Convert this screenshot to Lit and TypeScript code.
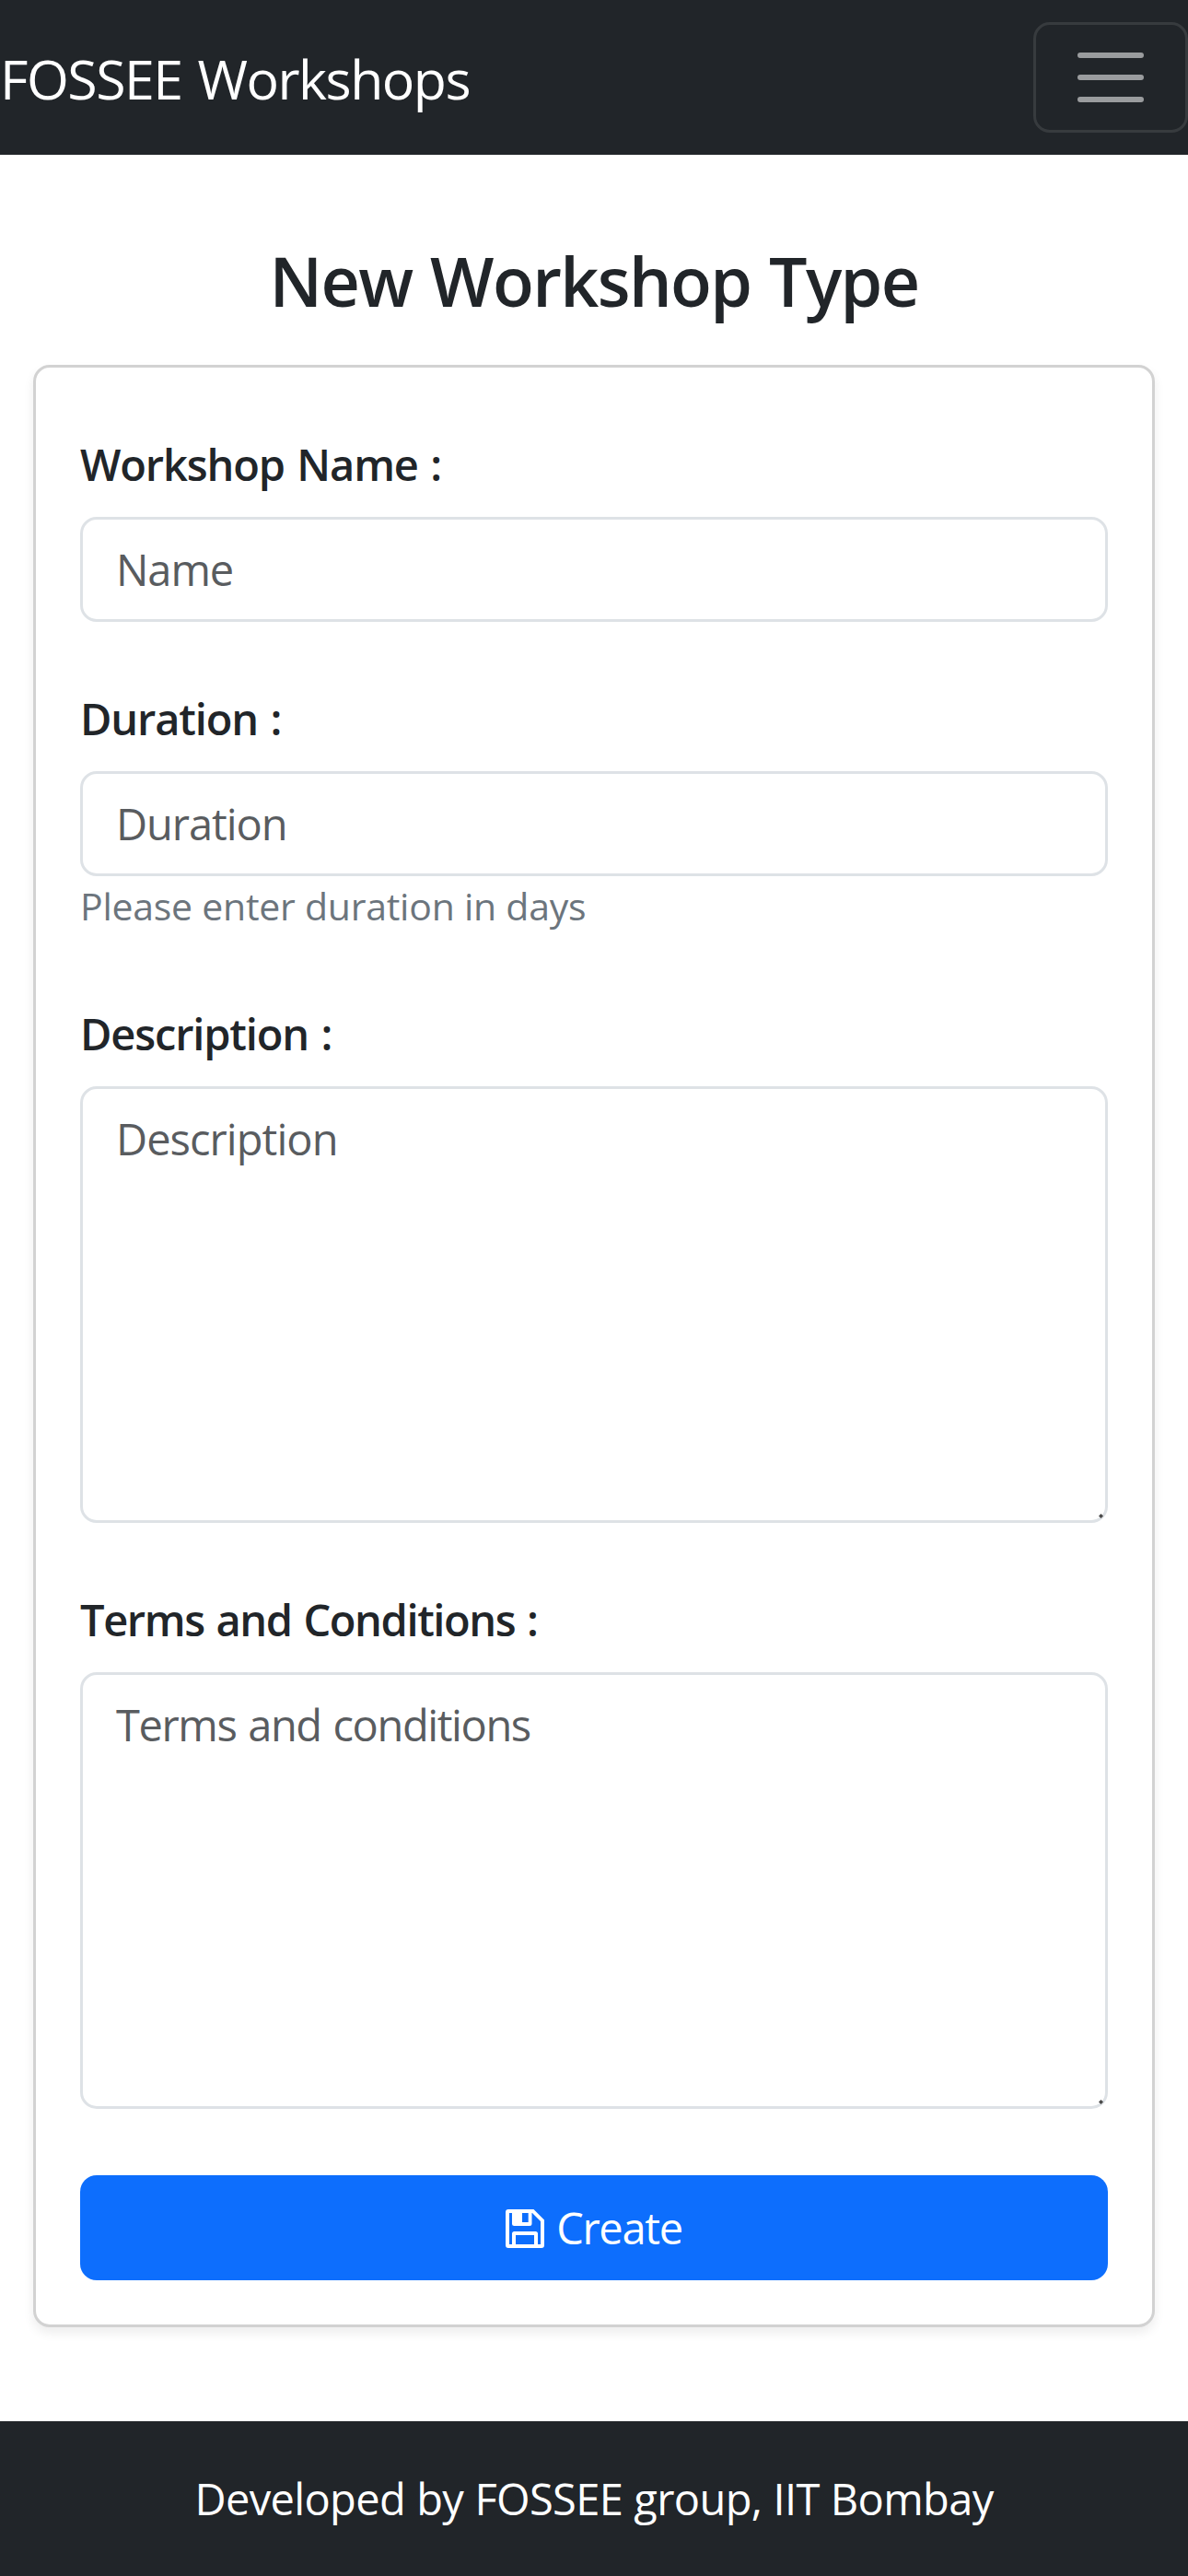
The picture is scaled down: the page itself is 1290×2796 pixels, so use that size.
import { LitElement, html, css, svg } from "lit";
import { customElement, property } from "lit/decorators.js";

const floppyIcon = svg`
  <path fill="currentColor" fill-rule="evenodd" d="M3 0H30.5L42 11.5V39A3 3 0 0 1 39 42H3A3 3 0 0 1 0 39V3A3 3 0 0 1 3 0ZM4 4V38H7V26.5A2.5 2.5 0 0 1 9.500 24H32.500A2.500 2.500 0 0 1 35 26.500V38H38V13L29 4H28.500V15.500A2.500 2.500 0 0 1 26 18H9.500A2.500 2.500 0 0 1 7 15.500V4ZM18 4V14H24.700V4ZM11 28V38H31V28Z"/>`;

@customElement("form-field")
export class FormField extends LitElement {
  @property() label = "";
  @property() placeholder = "";
  @property() hint = "";
  @property({ type: Boolean }) multiline = false;

  static styles = css`
    :host {
      display: block;
      font-family: "Open Sans", "Noto Sans", sans-serif;
      font-size: 47px;
      line-height: 72px;
      color: #212529;
    }
    .label {
      display: block;
      margin-bottom: 21px;
      font-weight: 600;
      letter-spacing: -1.15px;
      word-spacing: 2.5px;
      white-space: nowrap;
    }
    .control {
      display: block;
      box-sizing: border-box;
      width: 100%;
      height: 114px;
      margin: 0;
      padding: 18px 36px;
      border: 3px solid #dee2e6;
      border-radius: 18px;
      outline: none;
      background: #fff;
      font: inherit;
      line-height: 72px;
      letter-spacing: -1.05px;
      color: #212529;
    }
    .control::placeholder {
      color: #595c5f;
      opacity: 1;
    }
    .area {
      height: 474px;
      resize: none;
      overflow: hidden;
      letter-spacing: -0.95px;
    }
    .wrap {
      position: relative;
    }
    .grip {
      position: absolute;
      right: 5px;
      bottom: 5px;
      width: 5px;
      height: 5px;
    }
    .long {
      letter-spacing: -1.4px;
      word-spacing: 2px;
    }
    .hint {
      padding-bottom: 2px;
      font-size: 41px;
      line-height: 64px;
      letter-spacing: -0.25px;
      color: #6c757d;
    }
  `;

  render() {
    const long = this.label.length > 20 ? "long" : "";
    return html`
      <label class="label ${long}" for="control">${this.label}</label>
      ${this.multiline
        ? html`<div class="wrap">
            <textarea id="control" class="control area ${long}" placeholder=${this.placeholder}></textarea>
            <svg class="grip" viewBox="0 0 5 5"><path d="M2.500 0L5 2.500L2.500 5L0 2.500Z" fill="#4a4a4a" /></svg>
          </div>`
        : html`<input id="control" class="control" placeholder=${this.placeholder} />`}
      ${this.hint ? html`<div class="hint">${this.hint}</div>` : null}
    `;
  }
}

@customElement("app-root")
export class AppRoot extends LitElement {
  static styles = css`
    :host {
      display: flex;
      flex-direction: column;
      min-height: 100vh;
      background: #fff;
      font-family: "Open Sans", "Noto Sans", sans-serif;
      font-size: 47px;
      line-height: 72px;
      color: #212529;
    }
    .navbar {
      display: flex;
      align-items: center;
      justify-content: space-between;
      height: 168px;
      background: #212529;
    }
    .brand {
      padding-top: 2px;
      font-size: 59px;
      line-height: 90px;
      letter-spacing: -1.5px;
      word-spacing: 3px;
      color: #fff;
      white-space: nowrap;
    }
    .toggler {
      display: flex;
      align-items: center;
      justify-content: center;
      box-sizing: border-box;
      width: 168px;
      height: 120px;
      padding: 0;
      border: 3px solid rgba(255, 255, 255, 0.1);
      border-radius: 18px;
      background: transparent;
    }
    .bars {
      width: 90px;
      height: 90px;
    }
    .main {
      flex: 1;
      padding: 92px 36px 0;
    }
    .title {
      margin: 0 0 46px;
      font-size: 73.5px;
      font-weight: 600;
      line-height: 90px;
      letter-spacing: -1.6px;
      word-spacing: 2px;
      text-align: center;
    }
    .card {
      display: flex;
      flex-direction: column;
      gap: 69px;
      padding: 69px 48px 48px;
      border: 3px solid #d2d2d2;
      border-radius: 18px;
      background: #fff;
      box-shadow: 0 6px 12px rgba(0, 0, 0, 0.075);
    }
    .submit {
      display: flex;
      align-items: center;
      justify-content: center;
      gap: 13px;
      height: 114px;
      margin-top: 3px;
      padding: 0;
      border: 0;
      border-radius: 18px;
      background: #0d6efd;
      color: #fff;
      font: inherit;
      letter-spacing: -1.3px;
    }
    .floppy {
      width: 42px;
      height: 42px;
      margin-top: 2px;
    }
    .footer {
      height: 168px;
      background: #212529;
      color: #fff;
      line-height: 168px;
      letter-spacing: -0.64px;
      word-spacing: 0.6px;
      text-align: center;
      white-space: nowrap;
    }
  `;

  render() {
    return html`
      <nav class="navbar">
        <span class="brand">FOSSEE Workshops</span>
        <button class="toggler" aria-label="Toggle navigation">
          <svg class="bars" viewBox="0 0 30 30">
            <path d="M4 7h22M4 15h22M4 23h22" stroke="rgba(255,255,255,0.55)" stroke-width="2" stroke-linecap="round" />
          </svg>
        </button>
      </nav>
      <main class="main">
        <h2 class="title">New Workshop Type</h2>
        <form class="card" @submit=${(e: Event) => e.preventDefault()}>
          <form-field label="Workshop Name :" placeholder="Name"></form-field>
          <form-field label="Duration :" placeholder="Duration" hint="Please enter duration in days"></form-field>
          <form-field label="Description :" placeholder="Description" multiline></form-field>
          <form-field label="Terms and Conditions :" placeholder="Terms and conditions" multiline></form-field>
          <button class="submit">
            <svg class="floppy" viewBox="0 0 42 42">${floppyIcon}</svg>
            <span>Create</span>
          </button>
        </form>
      </main>
      <footer class="footer">Developed by FOSSEE group, IIT Bombay</footer>
    `;
  }
}
